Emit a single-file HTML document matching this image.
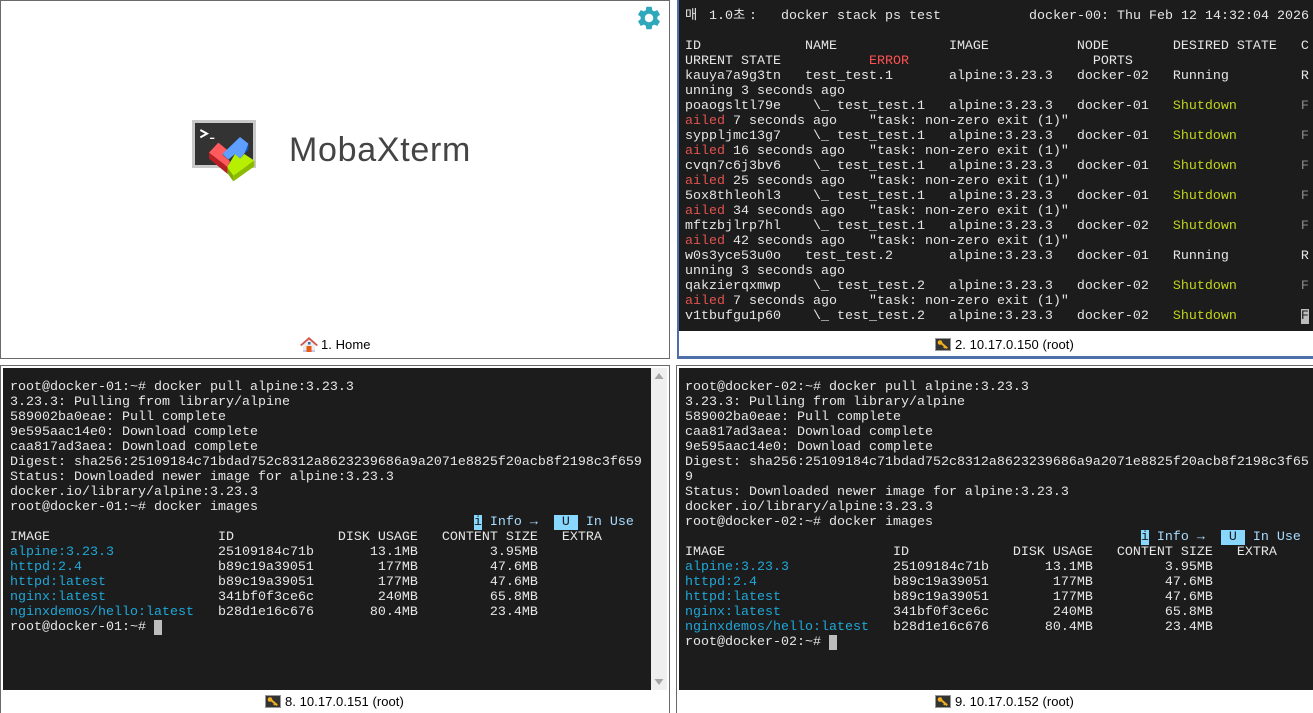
<!DOCTYPE html>
<html lang="ko"><head><meta charset="utf-8"><title>MobaXterm</title>
<style>
html,body{margin:0;padding:0;width:1313px;height:713px;overflow:hidden;background:#fff}
.a{position:absolute;box-sizing:border-box}
pre{position:absolute;margin:0;font:13.333px/15px "Liberation Mono","Noto Sans CJK KR",monospace;color:#e6e6e6;white-space:pre}
.term{background:#1c1c1c}
.s{color:#c0d41c}.r{color:#e0524f}.d{color:#8c8c8c}.c{color:#1fa7d8}.e{color:#ff5050}
.h{background:#87d7ff;color:#1c1c1c}.i{color:#a8dcff}
.cur{background:#bdbdbd;color:#1c1c1c}
.l{position:absolute;font:13px/14px "Liberation Sans",sans-serif;color:#000;white-space:pre;letter-spacing:.05px}
svg{position:absolute}
</style></head><body>
<div class="a" style="left:0;top:0;width:670px;height:359px;border:1px solid #6a6a6a"></div>
<svg style="left:635px;top:4px" width="28" height="28" viewBox="0 0 24 24"><path fill="#2fa8bb" d="M19.14 12.94c.04-.3.06-.61.06-.94 0-.32-.02-.64-.07-.94l2.03-1.58a.49.49 0 0 0 .12-.61l-1.92-3.32a.488.488 0 0 0-.59-.22l-2.39.96c-.5-.38-1.03-.7-1.62-.94l-.36-2.54a.484.484 0 0 0-.48-.41h-3.84c-.24 0-.43.17-.47.41l-.36 2.54c-.59.24-1.13.57-1.62.94l-2.39-.96c-.22-.08-.47 0-.59.22L2.74 8.87c-.12.21-.08.47.12.61l2.03 1.58c-.05.3-.09.63-.09.94s.02.64.07.94l-2.03 1.58a.49.49 0 0 0-.12.61l1.92 3.32c.12.22.37.29.59.22l2.39-.96c.5.38 1.03.7 1.62.94l.36 2.54c.05.24.24.41.48.41h3.84c.24 0 .44-.17.47-.41l.36-2.54c.59-.24 1.13-.56 1.62-.94l2.39.96c.22.08.47 0 .59-.22l1.92-3.32c.12-.22.07-.47-.12-.61l-2.01-1.58zM12 15.6c-1.98 0-3.6-1.62-3.6-3.6s1.62-3.6 3.6-3.6 3.6 1.62 3.6 3.6-1.62 3.6-3.6 3.6z"/></svg>
<svg style="left:185px;top:112px" width="80" height="76" viewBox="0 0 240 228">
<rect x="21" y="24" width="192" height="144" fill="#c9c9c9"/><rect x="30" y="33" width="174" height="126" fill="#333"/>
<path d="M46 54l20 11-20 11" fill="none" stroke="#fff" stroke-width="6"/><rect x="75" y="77" width="13" height="4" fill="#fff"/>
<path d="M72 122v18l56 46v-21z" fill="#b81f24"/><path d="M72 122L100 92l27 22-15 14 23 20-7 17z" fill="#ff5a5c"/>
<path d="M190 95v17l-12 13-6-11z" fill="#1459c8"/><path d="M112 126L165 75l25 20-12 30-13 15-15-14-20 17z" fill="#5f9fff"/>
<path d="M127 165v18l18 25v-18z" fill="#7fa800"/><path d="M145 190v18l63-45v-17z" fill="#8cbc00"/><path d="M127 165l23-39 15 14 13-14 30 20-63 44z" fill="#b6f000"/>
</svg>
<div class="l" style="left:289px;top:130px;font-size:34px;line-height:40px;color:#444;letter-spacing:.7px">MobaXterm</div>
<svg style="left:300px;top:336px" width="18" height="17" viewBox="0 0 18 17"><path d="M3 7l6-5 6 5v9H3z" fill="#ececec"/><rect x="3" y="14" width="12" height="2" fill="#c3c6ee"/><path d="M0 9L9 1l9 8-1.500 1L9 3.500 1.500 10z" fill="#d5534a"/><rect x="6.500" y="10" width="5" height="6" fill="#e85a10"/><rect x="8" y="6" width="2.500" height="2.500" fill="#2f6fa8"/></svg>
<div class="l" style="left:321px;top:338px">1. Home</div>

<!-- top right -->
<div class="a" style="left:677px;top:0;width:636px;height:359px;border-left:2px solid #4f6fa8;border-bottom:3px solid #4f6fa8"></div>
<div class="a term" style="left:679px;top:0;width:634px;height:331px"></div>
<pre style="left:685px;top:39px">ID             NAME              IMAGE           NODE        DESIRED STATE   C
URRENT STATE           <span class="e">ERROR</span>                       PORTS
kauya7a9g3tn   test_test.1       alpine:3.23.3   docker-02   Running         R
unning 3 seconds ago
poaogsltl79e    \_ test_test.1   alpine:3.23.3   docker-01   <span class="s">Shutdown</span>        <span class="d">F</span>
<span class="r">ailed</span> 7 seconds ago    "task: non-zero exit (1)"
syppljmc13g7    \_ test_test.1   alpine:3.23.3   docker-01   <span class="s">Shutdown</span>        <span class="d">F</span>
<span class="r">ailed</span> 16 seconds ago   "task: non-zero exit (1)"
cvqn7c6j3bv6    \_ test_test.1   alpine:3.23.3   docker-01   <span class="s">Shutdown</span>        <span class="d">F</span>
<span class="r">ailed</span> 25 seconds ago   "task: non-zero exit (1)"
5ox8thleohl3    \_ test_test.1   alpine:3.23.3   docker-01   <span class="s">Shutdown</span>        <span class="d">F</span>
<span class="r">ailed</span> 34 seconds ago   "task: non-zero exit (1)"
mftzbjlrp7hl    \_ test_test.1   alpine:3.23.3   docker-02   <span class="s">Shutdown</span>        <span class="d">F</span>
<span class="r">ailed</span> 42 seconds ago   "task: non-zero exit (1)"
w0s3yce53u0o   test_test.2       alpine:3.23.3   docker-01   Running         R
unning 3 seconds ago
qakzierqxmwp    \_ test_test.2   alpine:3.23.3   docker-02   <span class="s">Shutdown</span>        <span class="d">F</span>
<span class="r">ailed</span> 7 seconds ago    "task: non-zero exit (1)"
v1tbufgu1p60    \_ test_test.2   alpine:3.23.3   docker-02   <span class="s">Shutdown</span>        <span class="cur">F</span></pre>
<pre style="left:685px;top:9px">매</pre><pre style="left:709px;top:9px">1.0</pre><pre style="left:733px;top:9px">초</pre><pre style="left:749px;top:9px">:</pre><pre style="left:781px;top:9px">docker stack ps test</pre><pre style="left:1029px;top:9px">docker-00: Thu Feb 12 14:32:04 2026</pre>
<svg style="left:935px;top:338px" width="16" height="13" viewBox="0 0 16 13"><rect x=".5" y=".5" width="15" height="12" fill="#333" stroke="#999"/><path d="M6 5l6 5M10 8.500l-1 1.500M12 9l-1 1.500" stroke="#f2b01e" stroke-width="2" fill="none"/><circle cx="5" cy="4.500" r="2.300" fill="#f2b01e"/></svg>
<div class="l" style="left:955px;top:338px">2. 10.17.0.150 (root)</div>

<!-- bottom left -->
<div class="a" style="left:0;top:365px;width:670px;height:348px;border:1px solid #6a6a6a;border-bottom:0"></div>
<div class="a term" style="left:3px;top:368px;width:648px;height:322px"></div>
<div class="a" style="left:651px;top:368px;width:16px;height:322px;background:#efefef"></div>
<svg style="left:651px;top:368px" width="16" height="322"><path d="M3.500 11L8 5l4.500 6z" fill="#a6a6a6"/><path d="M3.500 311l4.500 6 4.500-6z" fill="#a6a6a6"/></svg>
<pre style="left:10px;top:380px">root@docker-01:~# docker pull alpine:3.23.3
3.23.3: Pulling from library/alpine
589002ba0eae: Pull complete
9e595aac14e0: Download complete
caa817ad3aea: Download complete
Digest: sha256:25109184c71bdad752c8312a8623239686a9a2071e8825f20acb8f2198c3f659
Status: Downloaded newer image for alpine:3.23.3
docker.io/library/alpine:3.23.3
root@docker-01:~# docker images
                                                          <span class="h">i</span> <span class="i">Info →</span>  <span class="h"> U </span> <span class="i">In Use</span>
IMAGE                     ID             DISK USAGE   CONTENT SIZE   EXTRA
<span class="c">alpine:3.23.3</span>             25109184c71b       13.1MB         3.95MB
<span class="c">httpd:2.4</span>                 b89c19a39051        177MB         47.6MB
<span class="c">httpd:latest</span>              b89c19a39051        177MB         47.6MB
<span class="c">nginx:latest</span>              341bf0f3ce6c        240MB         65.8MB
<span class="c">nginxdemos/hello:latest</span>   b28d1e16c676       80.4MB         23.4MB
root@docker-01:~# <span class="cur"> </span></pre>
<svg style="left:265px;top:695px" width="16" height="13" viewBox="0 0 16 13"><rect x=".5" y=".5" width="15" height="12" fill="#333" stroke="#999"/><path d="M6 5l6 5M10 8.500l-1 1.500M12 9l-1 1.500" stroke="#f2b01e" stroke-width="2" fill="none"/><circle cx="5" cy="4.500" r="2.300" fill="#f2b01e"/></svg>
<div class="l" style="left:285px;top:695px">8. 10.17.0.151 (root)</div>

<!-- bottom right -->
<div class="a" style="left:676px;top:365px;width:637px;height:348px;border:1px solid #6a6a6a;border-width:1px 0 0 1px"></div>
<div class="a term" style="left:679px;top:368px;width:634px;height:322px"></div>
<pre style="left:685px;top:380px">root@docker-02:~# docker pull alpine:3.23.3
3.23.3: Pulling from library/alpine
589002ba0eae: Pull complete
caa817ad3aea: Download complete
9e595aac14e0: Download complete
Digest: sha256:25109184c71bdad752c8312a8623239686a9a2071e8825f20acb8f2198c3f65
9
Status: Downloaded newer image for alpine:3.23.3
docker.io/library/alpine:3.23.3
root@docker-02:~# docker images
                                                         <span class="h">i</span> <span class="i">Info →</span>  <span class="h"> U </span> <span class="i">In Use</span>
IMAGE                     ID             DISK USAGE   CONTENT SIZE   EXTRA
<span class="c">alpine:3.23.3</span>             25109184c71b       13.1MB         3.95MB
<span class="c">httpd:2.4</span>                 b89c19a39051        177MB         47.6MB
<span class="c">httpd:latest</span>              b89c19a39051        177MB         47.6MB
<span class="c">nginx:latest</span>              341bf0f3ce6c        240MB         65.8MB
<span class="c">nginxdemos/hello:latest</span>   b28d1e16c676       80.4MB         23.4MB
root@docker-02:~# <span class="cur"> </span></pre>
<svg style="left:935px;top:695px" width="16" height="13" viewBox="0 0 16 13"><rect x=".5" y=".5" width="15" height="12" fill="#333" stroke="#999"/><path d="M6 5l6 5M10 8.500l-1 1.500M12 9l-1 1.500" stroke="#f2b01e" stroke-width="2" fill="none"/><circle cx="5" cy="4.500" r="2.300" fill="#f2b01e"/></svg>
<div class="l" style="left:955px;top:695px">9. 10.17.0.152 (root)</div>
</body></html>
